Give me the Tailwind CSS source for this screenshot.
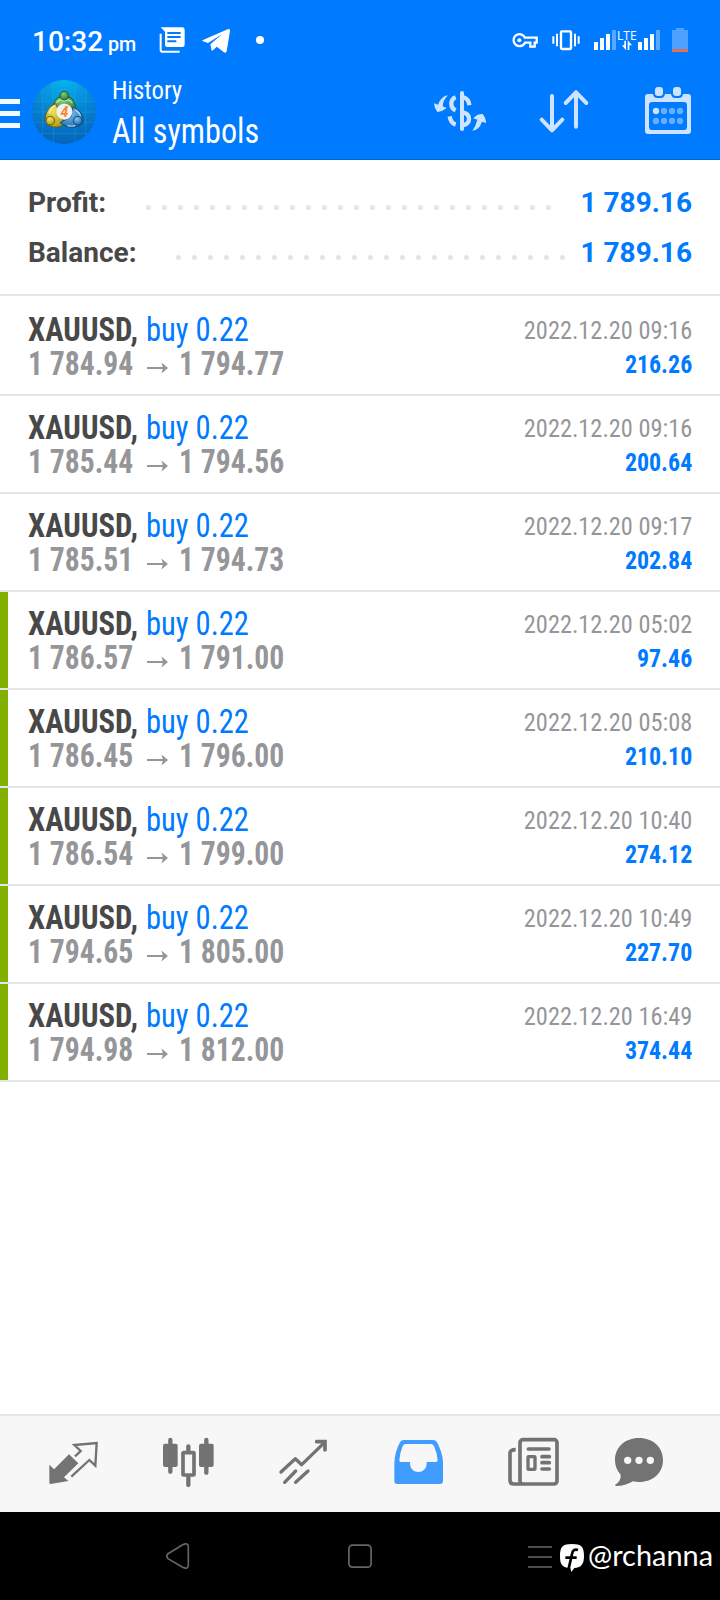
<!DOCTYPE html>
<html lang="en">
<head>
<meta charset="utf-8">
<meta name="viewport" content="width=720">
<title>History</title>
<script src="https://cdn.jsdelivr.net/npm/@tailwindcss/browser@4"></script>
</head>
<body class="w-[720px] h-[1600px] overflow-hidden bg-white font-['Roboto',sans-serif]">
<div class="flex flex-col w-[720px] h-[1600px]">

  <header class="h-[160px] shrink-0 bg-[#007aff] border-b border-[#0068d9] text-white">
    <!-- status bar -->
    <div class="flex h-[80px] pl-[32px] pr-[31px]">
      <div class="w-[125px] shrink-0 flex items-baseline pt-[25px] leading-[33px] whitespace-nowrap font-medium"><span class="text-[28px]">10:32</span><span class="text-[21px] ml-[5px] origin-left scale-x-[.94]">pm</span></div>
      <svg class="w-[30px] h-[80px] shrink-0" viewBox="471 0 90 240">
        <path fill="none" stroke="#fff" stroke-width="6" d="M482 101V150Q482 155 487 155H539"/>
        <path fill="#fff" fill-rule="evenodd" d="M482 82H547Q554 82 554 89V134Q554 141 547 141H502Q495 141 495 134V95ZM502 96V102H542V96ZM502 108V114H542V108ZM502 121V127H529V121Z"/>
      </svg>
      <svg class="w-[32px] h-[80px] shrink-0 ml-[13px]" viewBox="600 0 96 240"><path fill="#fff" d="M609 120L683 88Q691 85 690 93L680 154Q678 161 671 156L650 140L639 151Q635 154 634 148L631 133L666 103L624 129L609 124Q604 122 609 120Z"/></svg>
      <svg class="w-[10px] h-[80px] shrink-0 ml-[23px]" viewBox="765 0 30 240"><circle cx="780" cy="120" r="12" fill="#fff"/></svg>
      <div class="flex-1"></div>
      <svg class="w-[27px] h-[80px] shrink-0" viewBox="276 0 81 240">
        <path fill="none" stroke="#fff" stroke-width="7" d="M315 113H350V128H344V140H331V128H315A18 18 0 1 1 315 113Z"/><circle cx="298" cy="121" r="6" fill="#fff"/>
      </svg>
      <svg class="w-[30px] h-[80px] shrink-0 ml-[12px]" viewBox="393 0 90 240">
        <rect x="423" y="94" width="30" height="53" rx="3" fill="none" stroke="#fff" stroke-width="7"/>
        <path stroke="#fff" stroke-width="6" d="M411 101V139M400 109V131M465 101V139M476 109V131"/>
      </svg>
      <svg class="w-[68px] h-[80px] shrink-0 ml-[12px]" viewBox="519 0 204 240">
        <path fill="#fff" d="M522 126h12v24h-12zM540 114h12v36h-12zM558 102h12v48h-12zM654 126h12v24h-12zM672 114h12v36h-12zM690 102h12v48h-12z"/>
        <path fill="#fff" opacity=".35" d="M576 90h12v60h-12zM708 90h12v60h-12z"/>
        <text x="591" y="120" fill="#fff" font-family="Open Sans" font-size="36" textLength="59" lengthAdjust="spacingAndGlyphs">LTE</text>
        <path fill="#fff" d="M613 122h5v29L606 136h7zM623 150V121L636 136h-8v14z"/>
      </svg>
      <svg class="w-[18px] h-[80px] shrink-0 ml-[10px]" viewBox="753 0 54 240"><path fill="#4da2ff" d="M756 90H768V84H792V90H804V148H756Z"/><path fill="#fc6a45" d="M756 148h48v8h-48z"/></svg>
    </div>

    <!-- app bar -->
    <div class="flex h-[80px] pr-[28px]">
      <svg class="w-[20px] h-[80px] shrink-0" viewBox="0 240 60 240"><path fill="#fff" opacity=".95" d="M0 297h60v15H0zM0 333h60v15H0zM0 369h60v15H0z"/></svg>
      <svg class="w-[64px] h-[80px] shrink-0 ml-[12px]" viewBox="96 240 192 240">
        <defs>
          <radialGradient id="sky" cx=".5" cy="0" r="1"><stop offset="0" stop-color="#08b4f0"/><stop offset=".55" stop-color="#0583d2"/><stop offset="1" stop-color="#0563b8"/></radialGradient>
          <radialGradient id="gr" cx=".4" cy=".3" r=".8"><stop offset="0" stop-color="#83c977"/><stop offset="1" stop-color="#24792d"/></radialGradient>
          <radialGradient id="ye" cx=".4" cy=".3" r=".8"><stop offset="0" stop-color="#efe35c"/><stop offset="1" stop-color="#a89612"/></radialGradient>
          <radialGradient id="bl" cx=".4" cy=".3" r=".8"><stop offset="0" stop-color="#7cc3ee"/><stop offset="1" stop-color="#1664a8"/></radialGradient>
          <clipPath id="disc"><circle cx="192" cy="336" r="96"/></clipPath>
        </defs>
        <circle cx="192" cy="336" r="96" fill="url(#sky)"/>
        <path clip-path="url(#disc)" stroke="#5cc4f5" stroke-opacity=".3" stroke-width="2" d="M160 240V432M257 240V432M128 240V432M225 240V432M96 304H288M96 400H288M96 336H288M96 368H288"/>
        <path fill="url(#gr)" stroke="#1e5c28" stroke-width="3" d="M159 332C157 302 173 288 193 288C213 288 229 302 227 336L213 340L174 332Z"/>
        <path fill="url(#ye)" stroke="#6a630e" stroke-width="3" d="M167 311C145 318 133 342 137 364C142 383 176 387 193 373L184 345Z"/>
        <path fill="url(#bl)" stroke="#124a80" stroke-width="3" d="M218 322C240 324 251 350 249 366C242 386 201 387 180 368L213 350Z"/>
        <path fill="none" stroke="#fff" stroke-opacity=".6" stroke-width="4" d="M169 309Q178 294 192 303Q207 295 217 309M147 340Q153 323 166 317M226 331Q239 337 241 348M202 376Q216 381 226 376"/>
        <circle cx="193" cy="287" r="13" fill="url(#gr)" stroke="#1e5c28" stroke-width="3"/>
        <circle cx="151" cy="362" r="13" fill="url(#ye)" stroke="#6a630e" stroke-width="3"/>
        <circle cx="233" cy="362" r="13" fill="url(#bl)" stroke="#124a80" stroke-width="3"/>
        <circle cx="193" cy="335" r="24" fill="#f1f1f1"/>
        <text x="193" y="350" text-anchor="middle" fill="#f58a2c" font-family="Roboto" font-weight="700" font-style="italic" font-size="42">4</text>
      </svg>
      <div class="w-[337px] shrink-0 pl-[16px] font-['Roboto_Condensed',Roboto] font-stretch-condensed whitespace-nowrap">
        <div class="text-[26.500px] leading-[30px] -mt-[5px] origin-left scale-x-[.935]">History</div>
        <div class="text-[35px] leading-[40px] mt-[7px] origin-left scale-x-[.92]">All symbols</div>
      </div>
      <svg class="w-[54px] h-[80px] shrink-0" viewBox="39 240 162 240">
        <g fill="none" stroke="#cce4ff" stroke-width="13">
          <path stroke-linecap="round" stroke-width="12" d="M126 279V387"/>
          <path d="M107 292Q94 297 94 311Q94 325 107 331M129 291Q146 296 148 316M89 349Q92 369 107 374M129 337Q147 341 147 357Q147 372 129 376"/>
        </g>
        <path fill="#cce4ff" d="M84 286Q65 287 54 314L42 310Q43 325 52 336Q69 334 80 324L68 319Q69 301 84 286ZM157 392Q168 377 172 359L160 355Q170 342 188 342Q198 354 198 369L186 365Q177 391 157 392Z"/>
      </svg>
      <svg class="w-[52px] h-[80px] shrink-0 ml-[51px]" viewBox="354 240 156 240"><path fill="none" stroke="#cce4ff" stroke-width="12" stroke-linecap="round" stroke-linejoin="round" d="M396 288V391M365 359L396 391L427 359M468 380V277M437 309L468 277L499 309"/></svg>
      <svg class="w-[48px] h-[80px] shrink-0 ml-[54px]" viewBox="672 240 144 240">
        <path fill="#cce4ff" fill-rule="evenodd" d="M684 282H699Q701 294 711 294H723Q733 294 735 282H753Q755 294 765 294H777Q787 294 789 282H804Q813 282 813 291V393Q813 402 804 402H684Q675 402 675 393V291Q675 282 684 282ZM697 306Q687 306 687 316V380Q687 390 697 390H791Q801 390 801 380V316Q801 306 791 306Z"/>
        <rect x="705" y="261" width="24" height="27" rx="9" fill="#cce4ff"/><rect x="759" y="261" width="24" height="27" rx="9" fill="#cce4ff"/>
        <circle cx="708" cy="333" r="9.500" fill="#cce4ff"/>
        <g fill="#66afff"><circle cx="732" cy="333" r="9.500"/><circle cx="756" cy="333" r="9.500"/><circle cx="780" cy="333" r="9.500"/><circle cx="708" cy="363" r="9.500"/><circle cx="732" cy="363" r="9.500"/><circle cx="756" cy="363" r="9.500"/><circle cx="780" cy="363" r="9.500"/></g>
      </svg>
    </div>
  </header>

  <section class="h-[136px] shrink-0 border-b-2 border-[#e5e5e5] pt-[18px] px-[28px] text-[28px] leading-[50px] font-bold">
    <div class="flex h-[50px]">
      <span class="w-[117px] text-[#484848]">Profit:</span>
      <svg class="w-[408px] h-[50px]" viewBox="0 0 408 50"><path d="M3.400 29.500H404" stroke="#e5e5e5" stroke-width="5" stroke-linecap="round" stroke-dasharray="0 16"/></svg>
      <span class="flex-1 text-right text-[#007aff] whitespace-nowrap">1 789.16</span>
    </div>
    <div class="flex h-[50px]">
      <span class="w-[147px] text-[#484848]">Balance:</span>
      <svg class="w-[392px] h-[50px]" viewBox="0 0 392 50"><path d="M3.500 29.500H388" stroke="#e5e5e5" stroke-width="5" stroke-linecap="round" stroke-dasharray="0 16"/></svg>
      <span class="flex-1 text-right text-[#007aff] whitespace-nowrap">1 789.16</span>
    </div>
  </section>

  <main id="deals" class="flex-1 pt-[2px] font-['Roboto_Condensed',Roboto] font-stretch-condensed"></main>

  <nav class="h-[98px] shrink-0 flex bg-[#f7f7f7] border-t-2 border-[#e5e5e5] pl-[47px]">
    <svg class="w-[52px] h-[96px] shrink-0" viewBox="141 48 156 288">
      <path fill="#737373" d="M148 194L162 208L207 163L235 190L192 232L205 243L152 252Q148 252 148 248Z"/>
      <path fill="none" stroke="#737373" stroke-width="7" d="M225 169L242 153L223 135L290 129L286 197L268 180L214 230"/>
    </svg>
    <svg class="w-[53px] h-[96px] shrink-0 ml-[63px]" viewBox="486 48 159 288">
      <g fill="#737373"><rect x="489" y="131" width="44" height="70" rx="6"/><rect x="597" y="131" width="44" height="70" rx="6"/></g>
      <rect x="549" y="158" width="33" height="67" rx="2" fill="none" stroke="#737373" stroke-width="11"/>
      <path stroke="#737373" stroke-width="13" stroke-linecap="round" d="M511 120V215M619 120V218M565 139V152M565 232V255"/>
    </svg>
    <svg class="w-[50px] h-[96px] shrink-0 ml-[63px]" viewBox="834 48 150 288"><path fill="none" stroke="#737373" stroke-width="10" stroke-linecap="round" stroke-linejoin="round" d="M843 216L886 176L905 194L974 127M854 247L887 213M887 247L924 213"/><path fill="none" stroke="#737373" stroke-width="11" stroke-linecap="round" d="M950 125H975V150"/></svg>
    <svg class="w-[50px] h-[96px] shrink-0 ml-[66px]" viewBox="102 48 150 288"><path fill="#419cff" fill-rule="evenodd" d="M132 120H219Q227 120 231 127Q248 158 249 188V243Q249 252 240 252H112Q103 252 103 243V188Q105 155 120 127Q124 120 132 120ZM138 132Q131 132 128 139Q119 160 118 181Q118 186 123 186H150V192A25 24 0 0 0 200 192V186H228Q233 186 233 181Q232 160 222 139Q219 132 213 132Z"/></svg>
    <svg class="w-[53px] h-[96px] shrink-0 ml-[63px]" viewBox="441 48 159 288">
      <g fill="none" stroke="#737373" stroke-width="11"><rect x="480" y="119" width="111" height="133" rx="9"/><path d="M467 149Q450 149 450 160V241Q450 252 461 252H485"/><path stroke-linecap="round" d="M505 147H567M546 170H568M546 188H568M546 207H568"/></g>
      <rect x="504" y="170" width="21" height="38" rx="2" fill="none" stroke="#737373" stroke-width="10"/>
    </svg>
    <svg class="w-[50px] h-[96px] shrink-0 ml-[54px]" viewBox="762 48 150 288"><path fill="#737373" d="M837 114C879 114 909 142 909 180C909 219 879 246 837 246Q828 246 819 244Q794 259 766 258Q764 254 769 252Q783 242 782 224C770 211 765 197 765 180C765 142 795 114 837 114Z"/><g fill="#f7f7f7"><circle cx="803" cy="181" r="11"/><circle cx="837" cy="181" r="11"/><circle cx="871" cy="181" r="11"/></g></svg>
  </nav>

  <footer class="h-[88px] shrink-0 flex bg-black pl-[165px]">
    <svg class="w-[25px] h-[88px] shrink-0" viewBox="495 336 75 264"><path fill="none" stroke="#666" stroke-width="5" d="M504 461L548 434Q565 427 565 441V495Q565 509 548 502L504 476Q497 468 504 461Z"/></svg>
    <svg class="w-[24px] h-[88px] shrink-0 ml-[158px]" viewBox="0 0 24 88"><rect x=".9" y="33.200" width="22.200" height="22" rx="3.500" fill="none" stroke="#666" stroke-width="1.700"/></svg>
    <svg class="w-[24px] h-[88px] shrink-0 ml-[156px]" viewBox="504 336 72 264"><path stroke="#666" stroke-width="5" d="M504 441H576M504 471H576M504 501H576"/></svg>
    <svg class="w-[26px] h-[88px] shrink-0 ml-[7px]" viewBox="597 336 78 264"><path fill="#fff" d="M636 432C664 432 672 440 672 468C672 492 664 503 643 504L634 516L631 504C606 503 600 494 600 468C600 440 608 432 636 432Z"/><path fill="none" stroke="#000" stroke-width="8" d="M654 450Q639 445 636 462L626 506M616 473H650"/></svg>
    <svg class="w-[128px] h-[88px] shrink-0 ml-[3px]" viewBox="0 0 128 88"><text x="0" y="53.500" fill="#fff" font-family="Lato" font-size="28.500" textLength="125" lengthAdjust="spacingAndGlyphs">@rchanna</text></svg>
  </footer>
</div>

<script>
  const deals = [
    ['1 784.94', '1 794.77', '2022.12.20 09:16', '216.26', 0],
    ['1 785.44', '1 794.56', '2022.12.20 09:16', '200.64', 0],
    ['1 785.51', '1 794.73', '2022.12.20 09:17', '202.84', 0],
    ['1 786.57', '1 791.00', '2022.12.20 05:02', '97.46', 1],
    ['1 786.45', '1 796.00', '2022.12.20 05:08', '210.10', 1],
    ['1 786.54', '1 799.00', '2022.12.20 10:40', '274.12', 1],
    ['1 794.65', '1 805.00', '2022.12.20 10:49', '227.70', 1],
    ['1 794.98', '1 812.00', '2022.12.20 16:49', '374.44', 1],
  ];
  const arrow = '<svg class="w-[21px] h-[34px] mr-[11px] shrink-0" viewBox="0 0 21 34"><path fill="none" stroke="#959699" stroke-width="2" d="M0 21H19"/><path fill="#959699" d="M14.500 15.500L21 21L14.500 26.500L16 21Z"/></svg>';
  document.getElementById('deals').innerHTML = deals.map(([open, close, time, profit, hit]) => `
    <div class="flex h-[98px] border-b-2 border-[#e5e5e5] whitespace-nowrap leading-[34px]">
      <div class="${hit ? 'w-[8px] bg-[#80b000]' : 'w-[8px]'}"></div>
      <div class="flex-1 pl-[20px] pt-[15px] text-[33px]">
        <div class="flex h-[34px]"><b class="font-bold text-[#484848] w-[117.500px] origin-left scale-x-[.932]">XAUUSD,</b><span class="text-[#007aff] origin-left scale-x-[.926]">buy 0.22</span></div>
        <div class="flex h-[34px] font-bold text-[#959699]"><span class="w-[118.500px] shrink-0 origin-left scale-x-[.897]">${open}</span>${arrow}<span class="origin-left scale-x-[.897]">${close}</span></div>
      </div>
      <div class="pt-[15px] pr-[27.500px] text-right text-[26.500px]">
        <div class="text-[#959699] origin-right scale-x-[.919]">${time}</div>
        <div class="font-bold text-[#007aff] origin-right scale-x-[.902]">${profit}</div>
      </div>
    </div>`).join('');
</script>
</body>
</html>
